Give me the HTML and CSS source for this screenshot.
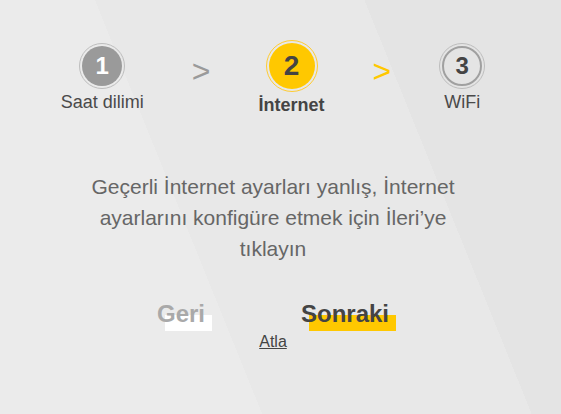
FILE: index.html
```html
<!DOCTYPE html>
<html lang="tr">
<head>
    <meta charset="UTF-8">
    <meta name="viewport" content="width=device-width, initial-scale=1.0">
    <title>Kurulum Sihirbazı</title>
    <link rel="stylesheet" href="styles.css">
</head>
<body>
    <div class="wizard">
        <div class="steps">
            <div class="step done">
                <div class="circleWrap"><div class="circle"><span class="num">1</span></div></div>
                <div class="label">Saat dilimi</div>
            </div>
            <div class="arrow">&gt;</div>
            <div class="step active">
                <div class="circleWrap"><div class="circle"><span class="num">2</span></div></div>
                <div class="label">İnternet</div>
            </div>
            <div class="arrow arrowActive">&gt;</div>
            <div class="step next">
                <div class="circleWrap"><div class="circle"><span class="num">3</span></div></div>
                <div class="label">WiFi</div>
            </div>
        </div>

        <p class="message">Geçerli İnternet ayarları yanlış, İnternet ayarlarını konfigüre etmek için İleri’ye tıklayın</p>

        <div class="buttons">
            <button class="navButton backButton">Geri</button>
            <button class="navButton nextButton">Sonraki</button>
        </div>
        <a href="#" class="skipLink">Atla</a>
    </div>
</body>
</html>
```

FILE: styles.css
```css
html {
    min-height: 100%;
    background: linear-gradient(68deg, #ebebeb 0 36%, #e8e8e8 36% 73%, #e4e4e4 73%);
}
body {
    margin: 0;
    font-family: 'Liberation Sans', Arial, sans-serif;
    color: #4a4a4a;
}
.wizard {
    width: 546px;
    display: flex;
    flex-direction: column;
    align-items: center;
    padding-top: 40px;
}
.steps {
    display: flex;
    align-items: flex-start;
    gap: 48px;
}
.step {
    display: flex;
    flex-direction: column;
    align-items: center;
}
.circleWrap {
    height: 52px;
    display: flex;
    align-items: center;
    justify-content: center;
}
.circle {
    width: 40px;
    height: 40px;
    padding: 2px;
    border: 1px solid #bdbdbd;
    border-radius: 50%;
}
.num {
    display: flex;
    align-items: center;
    justify-content: center;
    box-sizing: border-box;
    width: 100%;
    height: 100%;
    border-radius: 50%;
    font-size: 24px;
    font-weight: bold;
}
.done .num {
    background-color: #9a9a9a;
    color: #fff;
}
.next .num {
    border: 2px solid #a0a0a0;
    color: #444;
}
.active .circle {
    width: 46px;
    height: 46px;
    border-color: #ffcc33;
}
.active .num {
    background-color: #ffc800;
    color: #444;
    font-size: 28px;
}
.label {
    font-size: 18px;
    white-space: nowrap;
}
.active .label {
    margin-top: 3px;
    font-weight: bold;
    color: #444;
}
.arrow {
    margin-top: 13px;
    font-size: 32px;
    color: #9a9a9a;
}
.arrowActive {
    color: #ffc800;
}
.message {
    width: 400px;
    margin: 55px 0 0;
    font-size: 21px;
    line-height: 31px;
    text-align: center;
    color: #666;
}
.buttons {
    display: flex;
    gap: 96px;
    margin-top: 36px;
}
.navButton {
    position: relative;
    z-index: 0;
    padding: 0;
    border: none;
    background: none;
    font-family: inherit;
    font-size: 24px;
    font-weight: bold;
    cursor: pointer;
}
.navButton::before {
    content: '';
    position: absolute;
    z-index: -1;
    left: 8px;
    right: -7px;
    top: 15px;
    height: 16px;
}
.backButton {
    color: #a9a9a9;
}
.backButton::before {
    background-color: #fff;
}
.nextButton {
    color: #444;
}
.nextButton::before {
    background-color: #ffc800;
}
.skipLink {
    margin-top: 5px;
    font-size: 16px;
    color: #444;
}
```
